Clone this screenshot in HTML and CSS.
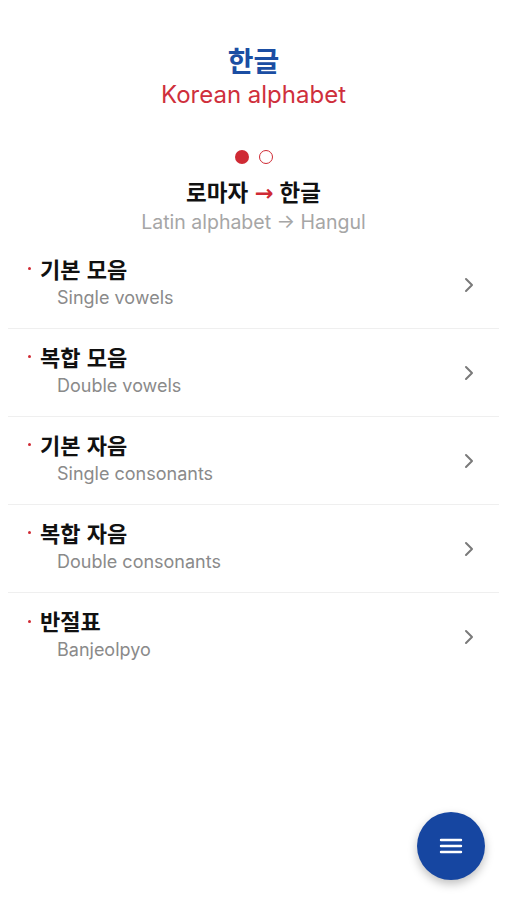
FILE: index.html
```html
<!DOCTYPE html>
<html lang="ko">
<head>
<meta charset="utf-8">
<link rel="stylesheet" href="styles.css">
</head>
<body>
<div class="app">
  <header class="header">
    <h1 class="title">한글</h1>
    <p class="subtitle">Korean alphabet</p>
  </header>
  <div class="dots">
    <span class="dot dot-on"></span>
    <span class="dot dot-off"></span>
  </div>
  <div class="mode">
    <div class="mode-ko">로마자 <span class="arrow">→</span> 한글</div>
    <div class="mode-en">Latin alphabet → Hangul</div>
  </div>
  <ul class="list">
    <li class="row">
      <div class="row-text">
        <div class="row-title"><span class="bullet"></span>기본 모음</div>
        <div class="row-sub">Single vowels</div>
      </div>
      <svg class="chev" width="10" height="16" viewBox="0 0 10 16"><path d="M2 2l6 6-6 6" fill="none" stroke="#7a7a7a" stroke-width="2" stroke-linecap="round" stroke-linejoin="round"/></svg>
    </li>
    <li class="row">
      <div class="row-text">
        <div class="row-title"><span class="bullet"></span>복합 모음</div>
        <div class="row-sub">Double vowels</div>
      </div>
      <svg class="chev" width="10" height="16" viewBox="0 0 10 16"><path d="M2 2l6 6-6 6" fill="none" stroke="#7a7a7a" stroke-width="2" stroke-linecap="round" stroke-linejoin="round"/></svg>
    </li>
    <li class="row">
      <div class="row-text">
        <div class="row-title"><span class="bullet"></span>기본 자음</div>
        <div class="row-sub">Single consonants</div>
      </div>
      <svg class="chev" width="10" height="16" viewBox="0 0 10 16"><path d="M2 2l6 6-6 6" fill="none" stroke="#7a7a7a" stroke-width="2" stroke-linecap="round" stroke-linejoin="round"/></svg>
    </li>
    <li class="row">
      <div class="row-text">
        <div class="row-title"><span class="bullet"></span>복합 자음</div>
        <div class="row-sub">Double consonants</div>
      </div>
      <svg class="chev" width="10" height="16" viewBox="0 0 10 16"><path d="M2 2l6 6-6 6" fill="none" stroke="#7a7a7a" stroke-width="2" stroke-linecap="round" stroke-linejoin="round"/></svg>
    </li>
    <li class="row">
      <div class="row-text">
        <div class="row-title"><span class="bullet"></span>반절표</div>
        <div class="row-sub">Banjeolpyo</div>
      </div>
      <svg class="chev" width="10" height="16" viewBox="0 0 10 16"><path d="M2 2l6 6-6 6" fill="none" stroke="#7a7a7a" stroke-width="2" stroke-linecap="round" stroke-linejoin="round"/></svg>
    </li>
  </ul>
  <button class="fab" aria-label="menu">
    <svg width="24" height="20" viewBox="0 0 24 20"><path d="M2 4h20M2 10h20M2 16h20" stroke="#fff" stroke-width="2.4" stroke-linecap="round"/></svg>
  </button>
</div>
</body>
</html>
```

FILE: styles.css
```css
* { box-sizing: border-box; }
html, body { margin: 0; padding: 0; background: #fff; }
body {
  font-family: Inter, "Noto Sans CJK KR", sans-serif;
  width: 507px;
  height: 900px;
  overflow: hidden;
}
.app {
  position: relative;
  height: 900px;
  padding: 0 8px;
}
.header {
  padding-top: 40px;
  text-align: center;
}
.title {
  margin: 0;
  font-family: "Noto Sans CJK KR", sans-serif;
  font-size: 28px;
  font-weight: 700;
  line-height: 40px;
  color: #1b4ea3;
}
.subtitle {
  margin: 0;
  font-size: 24px;
  line-height: 30px;
  color: #cf2f3c;
}
.dots {
  display: flex;
  justify-content: center;
  gap: 10px;
  margin-top: 40px;
  padding-left: 1px;
}
.dot {
  width: 14px;
  height: 14px;
  border-radius: 50%;
}
.dot-on { background: #cf2a34; }
.dot-off { border: 1.5px solid #cf2a34; }
.mode {
  text-align: center;
  margin-top: 11px;
}
.mode-ko {
  font-family: "Noto Sans CJK KR", sans-serif;
  font-size: 22.5px;
  font-weight: 700;
  line-height: 32px;
  color: #111;
}
.arrow { color: #cf2a34; font-family: "DejaVu Sans", sans-serif; font-weight: 700; }
.mode-en {
  font-size: 19.5px;
  line-height: 26px;
  color: #a6a6a6;
}
.list {
  list-style: none;
  margin: 6px 0 0;
  padding: 0;
}
.row {
  display: flex;
  align-items: center;
  height: 88px;
  border-bottom: 1px solid #efefef;
  padding: 0 25px 0 20px;
}
.row:last-child { border-bottom: none; }
.row-text { flex: 1; margin-top: -7px; }
.row-title {
  display: flex;
  align-items: center;
  font-family: "Noto Sans CJK KR", sans-serif;
  font-size: 22px;
  font-weight: 700;
  line-height: 30px;
  color: #111;
}
.bullet {
  width: 3px;
  height: 3px;
  border-radius: 50%;
  background: #d02a34;
  margin-right: 9px;
  margin-top: 2px;
}
.row-sub {
  padding-left: 29px;
  font-size: 18px;
  line-height: 24px;
  color: #8a8a8a;
  margin-top: 3px;
}
.chev { flex: none; margin-top: 0; }
.fab {
  position: absolute;
  left: 417px;
  top: 812px;
  width: 68px;
  height: 68px;
  border-radius: 50%;
  border: none;
  background: #1646a1;
  box-shadow: 0 4px 10px rgba(0,0,0,0.25);
  display: flex;
  align-items: center;
  justify-content: center;
  padding: 0;
}
```
